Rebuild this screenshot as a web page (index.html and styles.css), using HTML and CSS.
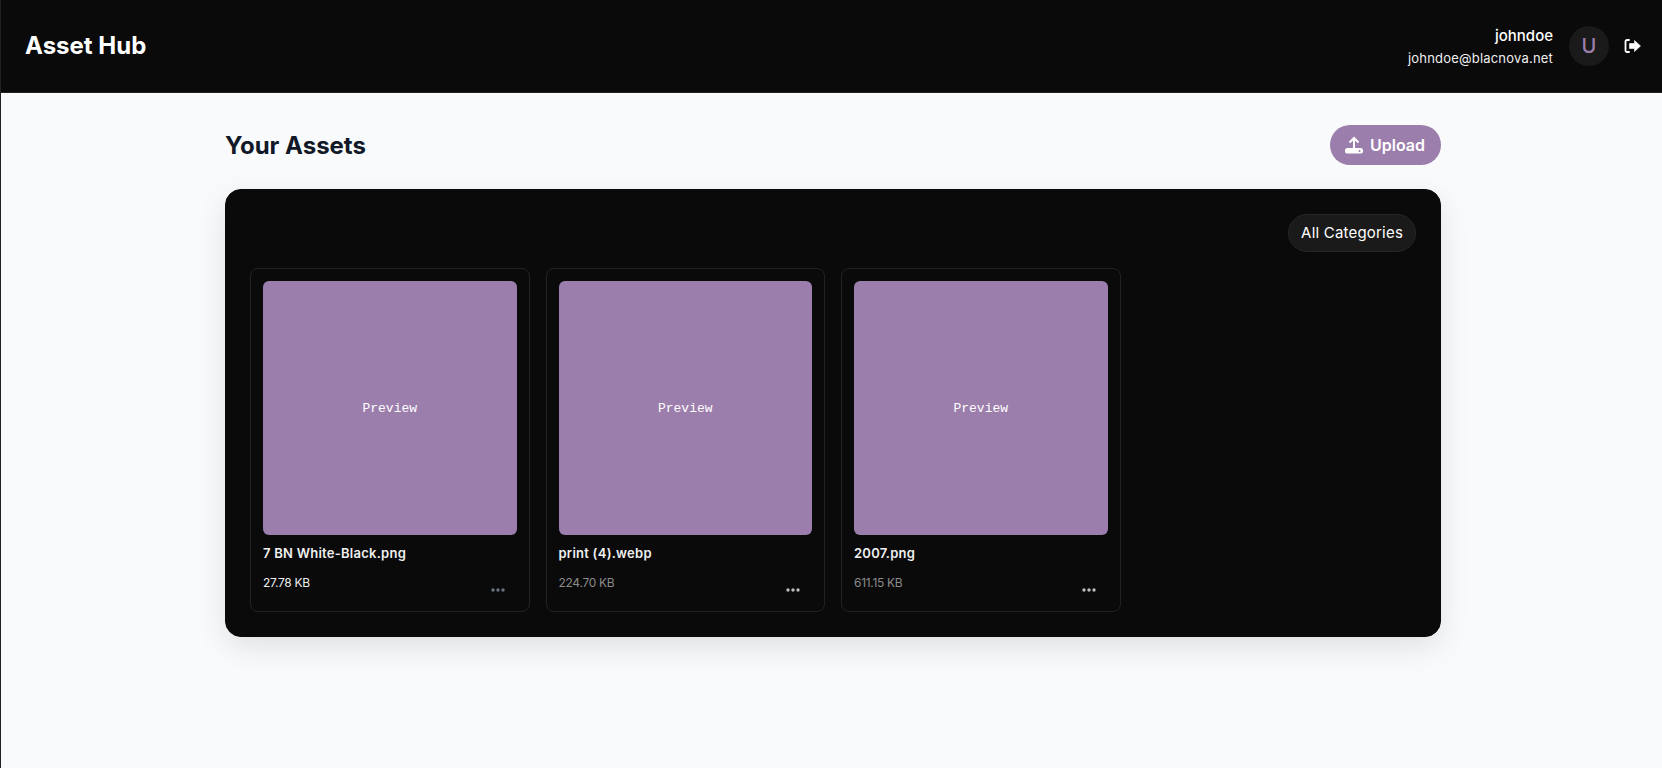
FILE: index.html
```html
<!DOCTYPE html>
<html lang="en">
<head>
<meta charset="utf-8">
<title>Asset Hub</title>
<link rel="stylesheet" href="styles.css">
</head>
<body>
<div class="app">
  <header class="topbar">
    <div class="brand">Asset Hub</div>
    <div class="user">
      <div class="user-text">
        <div class="user-name">johndoe</div>
        <div class="user-email">johndoe@blacnova.net</div>
      </div>
      <div class="avatar">U</div>
      <svg class="logout" viewBox="0 0 17 16" width="17" height="16" fill="currentColor"><path d="M5 2H3a1.500 1.500 0 0 0-1.500 1.500v9A1.500 1.500 0 0 0 3 14h2" fill="none" stroke="currentColor" stroke-width="1.800" stroke-linecap="round"/><path d="M16.500 8l-6-5.500V5.500H5.500v5h5v3z" stroke="currentColor" stroke-width=".6" stroke-linejoin="round"/></svg>
    </div>
  </header>
  <main class="main">
    <div class="title-row">
      <h1 class="title">Your Assets</h1>
      <button class="upload">
        <svg class="upload-icon" viewBox="0 0 18 18" width="18" height="18"><path d="M9 12V2M4.500 6.500L9 2l4.500 4.500" fill="none" stroke="currentColor" stroke-width="2"/><path d="M2.500 12h13a2.500 2.500 0 0 1 2.500 2.500v1a2 2 0 0 1-2 2H2a2 2 0 0 1-2-2v-1A2.500 2.500 0 0 1 2.500 12z" fill="currentColor"/><circle class="upload-dot" cx="14.500" cy="15" r="1"/></svg>
        Upload
      </button>
    </div>
    <section class="panel">
      <div class="filter-row"><div class="filter">All Categories</div></div>
      <div class="grid">
        <article class="card">
          <div class="preview">Preview</div>
          <div class="name">7 BN White-Black.png</div>
          <div class="meta">
            <span class="size size-first">27.78 KB</span>
            <svg class="dots dots-dim" viewBox="0 0 14 4" width="14" height="4" fill="currentColor"><circle cx="2" cy="2" r="1.700"/><circle cx="7" cy="2" r="1.700"/><circle cx="12" cy="2" r="1.700"/></svg>
          </div>
        </article>
        <article class="card">
          <div class="preview">Preview</div>
          <div class="name">print (4).webp</div>
          <div class="meta">
            <span class="size">224.70 KB</span>
            <svg class="dots" viewBox="0 0 14 4" width="14" height="4" fill="currentColor"><circle cx="2" cy="2" r="1.700"/><circle cx="7" cy="2" r="1.700"/><circle cx="12" cy="2" r="1.700"/></svg>
          </div>
        </article>
        <article class="card">
          <div class="preview">Preview</div>
          <div class="name">2007.png</div>
          <div class="meta">
            <span class="size">611.15 KB</span>
            <svg class="dots" viewBox="0 0 14 4" width="14" height="4" fill="currentColor"><circle cx="2" cy="2" r="1.700"/><circle cx="7" cy="2" r="1.700"/><circle cx="12" cy="2" r="1.700"/></svg>
          </div>
        </article>
      </div>
    </section>
  </main>
</div>
</body>
</html>
```
FILE: styles.css
```css
* { box-sizing: border-box; }
html, body { margin: 0; height: 100%; }
body { font-family: Inter, "Liberation Sans", sans-serif; background: #f9fafb; overflow: hidden; }
.app { min-height: 768px; border-left: 1px solid #1f1f24; }
.topbar { height: 93px; background: #0a0a0a; border-bottom: 1px solid #222; display: flex; align-items: center; justify-content: space-between; padding: 0 21px 0 24px; color: #fff; }
.brand { font-size: 24px; font-weight: 700; line-height: 32px; }
.user { display: flex; align-items: center; }
.user-text { text-align: right; margin-right: 16px; padding-top: 2px; }
.user-name { font-size: 15px; font-weight: 500; line-height: 20px; }
.user-email { font-size: 13px; letter-spacing: .2px; line-height: 20px; margin-top: 2px; color: #eee; }
.avatar { width: 40px; height: 40px; border-radius: 50%; background: #1a1a1a; color: #9c7eac; display: flex; align-items: center; justify-content: center; font-size: 20px; font-weight: 500; margin-right: 15px; }
.logout { display: block; }
.main { width: 1216px; margin-left: 224px; padding-top: 32px; }
.title-row { display: flex; align-items: center; justify-content: space-between; height: 40px; margin-bottom: 24px; }
.title { margin: 0; font-size: 24px; line-height: 34px; padding-top: 2px; font-weight: 700; color: #111827; }
.upload { height: 40px; border: 0; border-radius: 20px; background: #9c7eac; color: #fff; font: 600 16px Inter, sans-serif; padding: 0 16px 0 15px; display: flex; align-items: center; gap: 7px; }
.upload-icon { display: block; }
.upload-dot { fill: #9c7eac; }
.panel { background: #0a0a0a; border: 1px solid #0a0a0a; border-radius: 16px; padding: 24px; box-shadow: 0 10px 30px rgba(0,0,0,.1); }
.filter-row { display: flex; justify-content: flex-end; margin-bottom: 16px; }
.filter { height: 38px; border: 1px solid #262626; border-radius: 19px; background: #1a1a1a; color: #fff; font-size: 15px; letter-spacing: .2px; line-height: 36px; padding: 0 12px; }
.grid { display: grid; grid-template-columns: repeat(4, 1fr); gap: 16px; }
.card { border: 1px solid #222; border-radius: 8px; padding: 12px; height: 344px; }
.preview { height: 254px; padding-top: 1px; border-radius: 6px; background: #9c7eac; color: #fff; font-family: "Liberation Mono", monospace; font-size: 13px; display: flex; align-items: center; justify-content: center; }
.name { margin-top: 8px; font-size: 13px; letter-spacing: .25px; font-weight: 600; line-height: 20px; color: #f0f0f0; }
.meta { display: flex; justify-content: space-between; align-items: flex-start; margin-top: 11px; }
.size { font-size: 12px; letter-spacing: -.3px; line-height: 18px; color: #8a8a8a; }
.size-first { color: #eee; }
.dots { display: block; color: #bbb; margin: 14px 12px 0 0; }
.dots-dim { color: #6b7280; }
```
